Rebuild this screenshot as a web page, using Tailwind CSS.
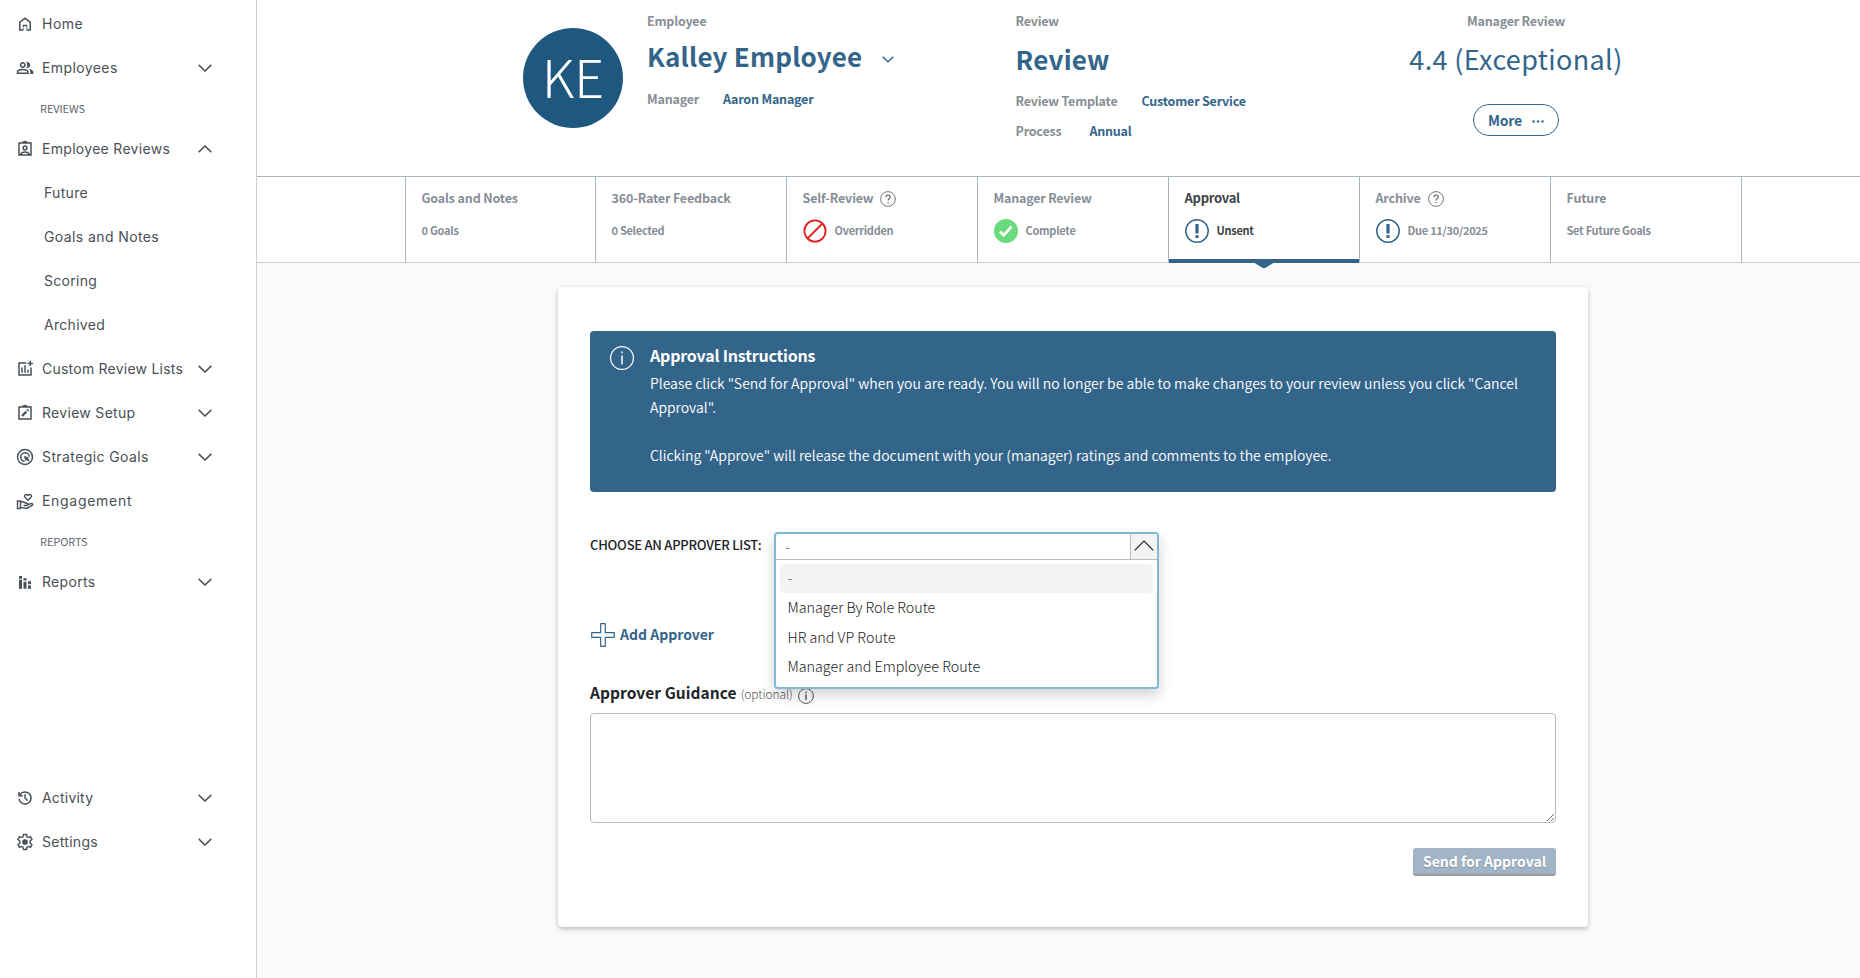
<!DOCTYPE html>
<html lang="en">
<head>
    <meta charset="UTF-8">
    <title>Approval</title>
    <script src="https://cdn.jsdelivr.net/npm/@tailwindcss/browser@4"></script>
</head>
<body class="flex h-[978px] w-[1860px] overflow-hidden bg-[#fafafa] font-['Noto_Sans_CJK_SC',sans-serif] whitespace-nowrap text-[#868e96]">
    <svg class="hidden">
        <symbol id="down" viewBox="0 0 14 8"><path d="M.7.9 7 7 13.3.9" fill="none" stroke="currentColor" stroke-width="1.5"/></symbol>
        <symbol id="up" viewBox="0 0 14 8"><path d="M.7 7.1 7 1l6.3 6.1" fill="none" stroke="currentColor" stroke-width="1.5"/></symbol>
        <symbol id="help" viewBox="0 0 16 16"><circle cx="8" cy="8" r="7.4" fill="none" stroke="#777" stroke-width="1"/><path d="M5.8 6.2c0-1.4 1-2.2 2.2-2.2s2.2.8 2.2 2c0 1.6-2.1 1.7-2.1 3.5M8.1 11v1.2" fill="none" stroke="#555" stroke-width="1.1"/></symbol>
        <symbol id="alert" viewBox="0 0 24 24"><circle cx="12" cy="12" r="11.2" fill="none" stroke="#33658a" stroke-width="1.5"/><path d="M12 5v9.5M12 16.2v2.8" stroke="#33658a" stroke-width="3.2"/></symbol>
    </svg>

    <!-- Sidebar -->
    <nav class="w-[257px] shrink-0 border-r border-[#c9d0da] bg-white pt-0.5 font-[Inter,sans-serif] text-[14px] tracking-[0.3px] text-[#495057] [&_span]:pb-0.5">
        <a class="flex h-11 items-center pl-4">
            <svg class="mr-2 size-[18px]" viewBox="0 0 24 24" fill="currentColor"><path d="M6 19h3v-6h6v6h3v-9l-6-4.5L6 10v9zm-2 2V9l8-6 8 6v12h-6v-6h-4v6H4z"/></svg>
            <span class="tracking-[0.5px]">Home</span>
        </a>
        <a class="flex h-11 items-center pr-11 pl-4">
            <svg class="mr-2 size-[18px]" viewBox="0 0 24 24" fill="currentColor"><path d="M1 20v-2.8q0-.85.438-1.562T2.6 14.55q1.55-.775 3.15-1.162T9 13t3.25.388 3.15 1.162q.725.375 1.163 1.088T17 17.2V20zm18 0v-3q0-1.1-.612-2.113T16.65 13.15q1.275.15 2.4.513t2.1.887q.9.5 1.375 1.112T23 17v3zM9 12q-1.65 0-2.825-1.175T5 8t1.175-2.825T9 4t2.825 1.175T13 8t-1.175 2.825T9 12m10-4q0 1.65-1.175 2.825T15 12q-.275 0-.7-.062t-.7-.138q.675-.8 1.038-1.775T15 8t-.362-2.025T13.6 4.2q.35-.125.7-.163T15 4q1.65 0 2.825 1.175T19 8M3 18h12v-.8q0-.275-.137-.5t-.363-.35q-1.35-.675-2.725-1.012T9 15t-2.775.338T3.5 16.35q-.225.125-.363.35T3 17.2zm6-8q.825 0 1.413-.587T11 8t-.587-1.412T9 6t-1.412.588T7 8t.588 1.413T9 10"/></svg>
            <span class="tracking-[0.4px]">Employees</span>
            <svg class="ml-auto h-2 w-3.5"><use href="#down"/></svg>
        </a>
        <div class="flex h-[37px] items-center pl-10 font-['Noto_Sans_CJK_SC',sans-serif] text-[11px] tracking-[-0.1px] text-[#5f666d]">REVIEWS</div>
        <a class="flex h-11 items-center pr-11 pl-4">
            <svg class="mr-2 size-[18px]" viewBox="0 0 24 24" fill="none" stroke="currentColor" stroke-width="2"><path d="M4 4h16v16H4zM9 4V3l3-1 3 1v1M6 19.5c1-2.5 3.5-3.5 6-3.5s5 1 6 3.5"/><circle cx="12" cy="10.5" r="2.5"/></svg>
            <span>Employee Reviews</span>
            <svg class="ml-auto h-2 w-3.5"><use href="#up"/></svg>
        </a>
        <a class="flex h-11 items-center pb-0.5 pl-11">Future</a>
        <a class="flex h-11 items-center pb-0.5 pl-11 tracking-[0.4px]">Goals and Notes</a>
        <a class="flex h-11 items-center pb-0.5 pl-11">Scoring</a>
        <a class="flex h-11 items-center pb-0.5 pl-11">Archived</a>
        <a class="flex h-11 items-center pr-11 pl-4">
            <svg class="mr-2 size-[18px]" viewBox="0 0 24 24" fill="none" stroke="currentColor" stroke-width="2"><path d="M14 4H4v16h16V10M8 17v-7M12 17V7M16 17v-4M19 1v7M15.5 4.5h7"/></svg>
            <span class="tracking-[0.23px]">Custom Review Lists</span>
            <svg class="ml-auto h-2 w-3.5"><use href="#down"/></svg>
        </a>
        <a class="flex h-11 items-center pr-11 pl-4">
            <svg class="mr-2 size-[18px]" viewBox="0 0 24 24" fill="none" stroke="currentColor" stroke-width="2"><path d="M4 4h16v16H4zM9 4V3l3-1 3 1v1"/><path d="M8 16l5.8-5.8M15 9l1.5-1.5" stroke-width="3"/></svg>
            <span>Review Setup</span>
            <svg class="ml-auto h-2 w-3.5"><use href="#down"/></svg>
        </a>
        <a class="flex h-11 items-center pr-11 pl-4">
            <svg class="mr-2 size-[18px]" viewBox="0 0 24 24" fill="none" stroke="currentColor" stroke-width="2"><circle cx="12" cy="12" r="10"/><path d="M11.5 17.8A5.8 5.8 0 1 1 17.8 11.5"/><path d="M11 11l2 6 1.3-1.7 2.4 2.4 1.2-1.2-2.4-2.4L17 13z" fill="currentColor" stroke-width=".8"/></svg>
            <span class="tracking-[0.4px]">Strategic Goals</span>
            <svg class="ml-auto h-2 w-3.5"><use href="#down"/></svg>
        </a>
        <a class="flex h-11 items-center pr-11 pl-4">
            <svg class="mr-2 size-[18px]" viewBox="0 0 24 24" fill="none" stroke="currentColor" stroke-width="1.9"><path d="M2 12h4v10H2zM6 13h3l6 2.3c1.5.6 1 2.7-.5 2.7H10M15 17l5-1.5c2-.5 3 1.5 1.5 2.5L14 22l-8-1.5M16 11l-4-4c-1.8-2 .8-5.5 4-2.5 3.2-3 5.8.5 4 2.5z"/></svg>
            <span class="tracking-[0.7px]">Engagement</span>
        </a>
        <div class="flex h-[37px] items-center pl-10 font-['Noto_Sans_CJK_SC',sans-serif] text-[11px] tracking-[-0.1px] text-[#5f666d]">REPORTS</div>
        <a class="flex h-11 items-center pr-11 pl-4">
            <svg class="mr-2 size-[18px]" viewBox="0 0 24 24" fill="currentColor"><path d="M4 9h4v12H4zM4 4h4v3.5H4zM10 11.5h4V21h-4zM10 7h4v3h-4zM16 16.5h4V21h-4zM16 11h4v4h-4z"/></svg>
            <span>Reports</span>
            <svg class="ml-auto h-2 w-3.5"><use href="#down"/></svg>
        </a>
        <a class="mt-[172px] flex h-11 items-center pr-11 pl-4">
            <svg class="mr-2 size-[18px]" viewBox="0 0 24 24" fill="currentColor"><path d="M12 21q-3.45 0-6.012-2.287T3.05 13H5.1q.35 2.6 2.313 4.3T12 19q2.925 0 4.963-2.037T19 12t-2.037-4.962T12 5q-1.725 0-3.225.8T6.25 8H9v2H3V4h2v2.35q1.275-1.6 3.113-2.475T12 3q1.875 0 3.513.713t2.85 1.924 1.925 2.85T21 12t-.712 3.513-1.925 2.85-2.85 1.925T12 21m2.8-4.8L11 12.4V7h2v4.6l3.2 3.2z"/></svg>
            <span class="tracking-[0.2px]">Activity</span>
            <svg class="ml-auto h-2 w-3.5"><use href="#down"/></svg>
        </a>
        <a class="flex h-11 items-center pr-11 pl-4">
            <svg class="mr-2 size-[18px]" viewBox="0 0 24 24" fill="currentColor"><path d="M10 2h4l.6 3.1 1.7 1 3-1.1 2 3.5-2.4 2.1v2.8l2.4 2.1-2 3.5-3-1.1-1.7 1L14 22h-4l-.6-3.1-1.7-1-3 1.1-2-3.5 2.4-2.1v-2.8L2.7 8.5l2-3.5 3 1.1 1.7-1z" fill="none" stroke="currentColor" stroke-width="1.9"/><circle cx="12" cy="12" r="3.8"/></svg>
            <span>Settings</span>
            <svg class="ml-auto h-2 w-3.5"><use href="#down"/></svg>
        </a>
    </nav>

    <div class="flex-1">
        <!-- Review header -->
        <header class="flex h-[176px] bg-white pl-[266px] text-[12.5px] leading-6 font-bold tracking-[-0.2px]">
            <div class="mt-7 flex size-[100px] items-center justify-center rounded-full bg-[#1f587f] pb-1 text-[52px] font-light tracking-normal text-white">KE</div>
            <div class="ml-6 w-[368.5px] pt-[9px]">
                <div>Employee</div>
                <div class="mt-[7px] flex h-8 items-center text-[#33658a]">
                    <h1 class="text-[26px] tracking-[0.2px]">Kalley Employee</h1>
                    <svg class="mt-1.5 ml-5 h-[7px] w-3" viewBox="0 0 12 7"><path d="M.7.7 6 5.8 11.3.7" fill="none" stroke="currentColor" stroke-width="1.5"/></svg>
                </div>
                <div class="mt-[15px] flex gap-6"><span>Manager</span><span class="text-[#33658a]">Aaron Manager</span></div>
            </div>
            <div class="w-[390px] pt-[9px]">
                <div>Review</div>
                <h1 class="mt-2.5 h-8 text-[26px] leading-8 tracking-[0.25px] text-[#33658a]">Review</h1>
                <div class="mt-3.5 flex gap-6"><span>Review Template</span><span class="text-[#33658a]">Customer Service</span></div>
                <div class="mt-1.5 flex gap-7"><span>Process</span><span class="text-[#33658a]">Annual</span></div>
            </div>
            <div class="flex w-[221px] flex-col items-center pt-[9px]">
                <div>Manager Review</div>
                <div class="mt-2.5 h-8 text-[27px] leading-8 font-normal tracking-[0.35px] text-[#33658a]">4.4 (Exceptional)</div>
                <button class="mt-[29px] flex h-8 w-[86px] items-center justify-center gap-2.5 rounded-full border border-[#33658a] text-[14px] text-[#33658a]">
                    More
                    <svg class="mt-0.5 h-[3px] w-3" viewBox="0 0 12 3" fill="currentColor"><circle cx="1.5" cy="1.5" r="1.2"/><circle cx="6" cy="1.5" r="1.2"/><circle cx="10.5" cy="1.5" r="1.2"/></svg>
                </button>
            </div>
        </header>

        <!-- Process steps -->
        <div class="flex h-[87px] border-t border-b border-t-[#a9b3bb] border-b-[#c9ced3] bg-white text-[11px] leading-6 font-bold tracking-[-0.28px]">
            <div class="w-[148px]"></div>
            <div class="w-[190px] border-l border-[#a9b3bb] pt-[9px] pl-[15.5px]">
                <div class="text-[12.5px] tracking-[-0.15px]">Goals and Notes</div>
                <div class="mt-2">0 Goals</div>
            </div>
            <div class="w-[191px] border-l border-[#a9b3bb] pt-[9px] pl-[15.5px]">
                <div class="text-[12.5px] tracking-[-0.15px]">360-Rater Feedback</div>
                <div class="mt-2">0 Selected</div>
            </div>
            <div class="w-[191px] border-l border-[#a9b3bb] pt-[9px] pl-[15.5px]">
                <div class="flex items-center gap-[7px] text-[12.5px] tracking-[-0.15px]">Self-Review <svg class="mt-0.5 size-4"><use href="#help"/></svg></div>
                <div class="mt-[9px] flex h-6 items-center gap-2">
                    <svg class="size-6" viewBox="0 0 24 24" fill="none" stroke="#e02020" stroke-width="1.8"><circle cx="12" cy="12" r="10.6"/><path d="M4.5 19.5l15-15"/></svg>
                    <span class="pb-0.5">Overridden</span>
                </div>
            </div>
            <div class="w-[191px] border-l border-[#a9b3bb] pt-[9px] pl-[15.5px]">
                <div class="text-[12.5px] tracking-[-0.2px]">Manager Review</div>
                <div class="mt-[9px] flex h-6 items-center gap-2">
                    <svg class="size-6" viewBox="0 0 24 24"><circle cx="12" cy="12" r="12" fill="#69db7c"/><path d="M6 12.5l3.8 3.8 7.7-8.8" fill="none" stroke="#fff" stroke-width="2.8"/></svg>
                    <span class="pb-0.5">Complete</span>
                </div>
            </div>
            <div class="relative w-[191px] border-l border-[#a9b3bb] pt-[9px] pl-[15.5px] text-[#3d444b]">
                <div class="text-[13px]">Approval</div>
                <div class="mt-[9px] flex h-6 items-center gap-2">
                    <svg class="size-6"><use href="#alert"/></svg>
                    <span class="pb-0.5">Unsent</span>
                </div>
                <div class="absolute right-0 -bottom-px left-0 h-1 bg-[#33658a]"></div>
                <svg class="absolute -bottom-1.5 left-[84px] h-1.5 w-[22px]" viewBox="0 0 22 6"><path d="M0 0h22l-9 5.5q-2 1-4 0z" fill="#33658a"/></svg>
            </div>
            <div class="w-[191px] border-l border-[#a9b3bb] pt-[9px] pl-[15.5px]">
                <div class="flex items-center gap-[7px] text-[12.5px] tracking-[-0.15px]">Archive <svg class="mt-0.5 size-4"><use href="#help"/></svg></div>
                <div class="mt-[9px] flex h-6 items-center gap-2">
                    <svg class="size-6"><use href="#alert"/></svg>
                    <span class="pb-0.5">Due 11/30/2025</span>
                </div>
            </div>
            <div class="w-[192px] border-r border-l border-[#a9b3bb] pt-[9px] pl-[15.5px]">
                <div class="text-[12.5px] tracking-[-0.15px]">Future</div>
                <div class="mt-2">Set Future Goals</div>
            </div>
        </div>

        <!-- Approval card -->
        <main class="mt-6 ml-[301px] h-[640px] w-[1030px] rounded bg-white px-8 pt-11 text-[#212529] shadow-[0_2px_5px_rgba(0,0,0,0.25)]">
            <div class="flex h-[161px] rounded bg-[#33658a] pt-3 pl-5 text-[14px] leading-6 text-white">
                <svg class="mt-[3px] mr-4 size-6" viewBox="0 0 24 24" fill="none" stroke="#fff"><circle cx="12" cy="12" r="11.4" stroke-width="1.2"/><path d="M12 9.5v9M12 5.5v1.8" stroke-width="1.5"/></svg>
                <div class="font-[350] tracking-[-0.01px]">
                    <h2 class="mb-1 text-[16px] font-bold tracking-[-0.2px]">Approval Instructions</h2>
                    <p>Please click "Send for Approval" when you are ready. You will no longer be able to make changes to your review unless you click "Cancel<br>Approval".</p>
                    <p class="mt-6">Clicking "Approve" will release the document with your (manager) ratings and comments to the employee.</p>
                </div>
            </div>

            <div class="mt-10 flex h-7">
                <label class="w-[184px] text-[13px] leading-[26px] font-medium tracking-[-0.25px]">CHOOSE AN APPROVER LIST:</label>
                <div class="relative w-[385px]">
                    <div class="absolute top-0 left-0 z-10 h-[157px] w-[385px] rounded-sm border-2 border-[#82b8d6] bg-white text-[14.3px] font-light text-[#222] shadow-[0_6px_14px_rgba(0,0,0,0.18)]">
                        <div class="flex h-[26px] border-b border-[#bbb]">
                            <span class="flex-1 pl-[9px] leading-[25px] font-normal text-[#888]">-</span>
                            <span class="flex w-[27px] items-center justify-center border-l border-[#bbb] bg-[#f3f3f3] pb-0.5">
                                <svg class="h-[11px] w-5" viewBox="0 0 20 11"><path d="M.7 10.3 10 1l9.3 9.3" fill="none" stroke="#222" stroke-width="1.2"/></svg>
                            </span>
                        </div>
                        <ul class="px-1 pt-1 leading-[29.5px]">
                            <li class="h-[29px] rounded-sm bg-[#f3f3f3] pl-[7.5px] leading-[28px] font-normal text-[#888]">-</li>
                            <li class="-mt-px pl-[7.5px]">Manager By Role Route</li>
                            <li class="pl-[7.5px]">HR and VP Route</li>
                            <li class="pl-[7.5px]">Manager and Employee Route</li>
                        </ul>
                    </div>
                </div>
            </div>

            <div class="mt-[62px] flex h-6 items-center text-[14px] font-bold text-[#33658a]">
                <svg class="mt-px mr-[5px] ml-px size-6" viewBox="0 0 24 24" fill="none" stroke="currentColor" stroke-width="1.2"><path d="M9.7.7h4.6v9h9v4.6h-9v9H9.7v-9h-9V9.7h9z" stroke-linejoin="round"/></svg>
                Add Approver
            </div>

            <div class="mt-[33px] flex h-7 items-center">
                <span class="text-[15.5px] font-bold tracking-[0.06px]">Approver Guidance</span>
                <span class="mt-0.5 ml-1 text-[12px] font-light tracking-[-0.1px] text-[#555]">(optional)</span>
                <svg class="mt-1.5 ml-[5px] size-4" viewBox="0 0 16 16" fill="none" stroke="#555"><circle cx="8" cy="8" r="7.4"/><path d="M8 6.5V12M8 3.8v1.4" stroke-width="1.5"/></svg>
            </div>
            <textarea class="mt-1.5 block h-[110px] w-[966px] rounded-sm border border-[#bbb]"></textarea>
            <button class="mt-[25px] ml-auto block h-7 w-[143px] rounded-[3px] border-b-2 border-[#999] bg-[#a1b5c6] text-[14px] leading-[26px] font-bold text-white text-shadow-[0_1px_1px_rgba(0,0,0,0.2)]">Send for Approval</button>
        </main>
    </div>
</body>
</html>
